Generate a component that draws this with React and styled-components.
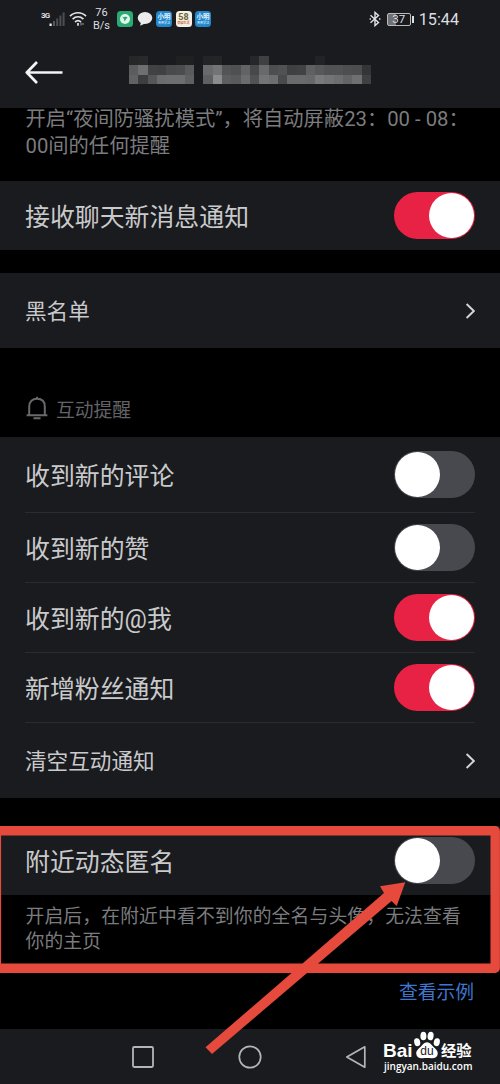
import React, { useState } from 'react'
import styled, { createGlobalStyle } from 'styled-components'

const colors = {
    page: '#000000',
    panel: '#1a1b1e',
    line: '#2b2c2f',
    text: '#c9cacc',
    muted: '#7b7c7f',
    section: '#626366',
    link: '#3f77cf',
    on: '#e72244',
    off: '#48484f',
    mark: '#e64a3c',
    white: '#ffffff',
}

const notifications = [
    { id: 'comment', name: '收到新的评论', active: false, height: 76 },
    { id: 'like', name: '收到新的赞', active: false, height: 70 },
    { id: 'mention', name: '收到新的@我', active: true, height: 70 },
    { id: 'fans', name: '新增粉丝通知', active: true, height: 70 },
]

// grey level of each title block, null leaves the bar visible
const titleBlocks = [
    [37, 39, null, null, null, 30, 30, null, 34, 35, null, null, null, 37, 62, null, null, null, null, null, 33, null, null, null, null, null],
    [90, 109, 64, 62, 72, 74, 88, null, 104, 114, 82, 78, 97, 70, 103, 76, 80, 62, 64, 94, 86, 80, 80, 76, 75, 51],
    [96, 60, 84, 106, 108, 108, 94, null, 94, 138, 92, 88, 106, 80, 114, 108, 72, 104, 104, 102, 120, 114, 108, 98, 110, 62],
]

function Switch({ active }) {
    const [checked, setChecked] = useState(active)
    return (
        <Track
            type='button'
            role='switch'
            aria-checked={checked}
            $on={checked}
            onClick={() => setChecked(!checked)}
        >
            <Thumb />
        </Track>
    )
}

function Chevron() {
    return (
        <svg width='10' height='18' viewBox='0 0 10 18' fill='none'>
            <path d='M1.6 2 8.8 9 1.6 16' stroke='#d4d5d7' strokeWidth='1.9' />
        </svg>
    )
}

function StatusBar() {
    return (
        <Status>
            <Signal>
                <Network>3G</Network>
                <svg width='17' height='15' viewBox='0 0 17 15'>
                    <rect x='0.5' y='11.5' width='2.2' height='2.5' fill='#eee' />
                    <rect x='4' y='9' width='2' height='5' fill='#55565a' />
                    <rect x='7.2' y='6.5' width='2' height='7.5' fill='#4d4e52' />
                    <rect x='10.4' y='3.5' width='2' height='10.5' fill='#4d4e52' />
                    <rect x='13.6' y='0.5' width='2' height='13.5' fill='#4d4e52' />
                </svg>
            </Signal>
            <svg width='18' height='16' viewBox='0 0 18 16' fill='none' stroke='#e2e3e5' strokeWidth='1.7'>
                <path d='M1 5.2C5.5 .6 12.5 .6 17 5.2' />
                <path d='M3.6 8.2c3.2-3 7.6-3 10.8 0' />
                <path d='M6 11c1.9-1.7 4.1-1.7 6 0' />
                <path d='M9 12v2.8' />
                <path d='M12 11.5v3m2-2.5v2' strokeWidth='1' stroke='#9a9b9e' />
            </svg>
            <Speed>
                <span>76</span>
                <span>B/s</span>
            </Speed>
            <Apps>
                <AppIcon $color='#2bab74'>
                    <svg width='12' height='12' viewBox='0 0 12 12'>
                        <circle cx='6' cy='6' r='5' fill='#e4f5ed' />
                        <path d='M3 3.4c1.6 1.4 3.2.6 3 .2l2.6.6L5.4 8.6 5 6.2Z' fill='#2bab74' />
                    </svg>
                </AppIcon>
                <svg width='16' height='16' viewBox='0 0 16 16'>
                    <ellipse cx='8' cy='7' rx='7.3' ry='6' fill='#ececec' />
                    <path d='m4 10.5-.8 4.3 5.3-2.5Z' fill='#ececec' />
                </svg>
                <AppIcon $color='#2186cb'>
                    <AppName>小明</AppName>
                    <AppNote>天天学习</AppNote>
                </AppIcon>
                <AppIcon $color='#f5efe4'>
                    <AppName $color='#6c6338' $size='9px'>58</AppName>
                    <AppNote $color='#c8623c'>同城生活</AppNote>
                </AppIcon>
                <AppIcon $color='#2186cb'>
                    <AppName>小明</AppName>
                    <AppNote>天天学习</AppNote>
                </AppIcon>
            </Apps>
            <StatusRight>
                <svg width='12' height='16' viewBox='0 0 12 16' fill='none' stroke='#e2e3e5' strokeWidth='1.4'>
                    <path d='m1.5 4.3 8 7.2L6 14.6V1.4l3.5 3.1-8 7.2' />
                    <path d='M.6 8h1.4m8 0h1.4' />
                </svg>
                <Battery>
                    <BatteryLevel>37</BatteryLevel>
                    <BatteryTip />
                </Battery>
                <Time>15:44</Time>
            </StatusRight>
        </Status>
    )
}

function TitleBar() {
    return (
        <Title>
            <svg width='38' height='24' viewBox='0 0 38 24' fill='none' stroke='#f4f4f5' strokeWidth='2.7'>
                <path d='M37.5 12.5H2M12 2 1.8 12.5 12 23' strokeLinejoin='round' />
            </svg>
            <svg width='242' height='28' viewBox='0 0 26 3' preserveAspectRatio='none' shapeRendering='crispEdges'>
                {titleBlocks.map((row, y) => row.map((level, x) => level && (
                    <rect
                        key={`${x}-${y}`}
                        x={x}
                        y={y}
                        width='1.02'
                        height='1.02'
                        fill={`rgb(${level}, ${level + 2}, ${level + 4})`}
                    />
                )))}
            </svg>
        </Title>
    )
}

function Watermark() {
    return (
        <Brand>
            <BrandRow>
                <BrandLatin>Bai</BrandLatin>
                <Paw>
                    <svg width='28' height='28' viewBox='0 0 28 28' fill='#fff'>
                        <ellipse cx='4.2' cy='11.2' rx='3' ry='4' transform='rotate(-14 4.2 11.2)' />
                        <ellipse cx='10.4' cy='5' rx='3' ry='4.3' />
                        <ellipse cx='17.6' cy='5' rx='3' ry='4.3' transform='rotate(8 17.6 5)' />
                        <ellipse cx='23.8' cy='11.2' rx='3' ry='4' transform='rotate(14 23.8 11.2)' />
                        <path d='M14 11.2c3 0 4.4 2.4 6.3 4.5 2 2.1 4.9 3.8 4.4 7.4-.5 3.4-3.4 4.6-6.2 4.2-3-.5-6-.5-9 0-2.8.4-5.7-.8-6.2-4.2-.5-3.6 2.4-5.3 4.4-7.4 1.9-2.1 3.3-4.5 6.3-4.5Z' />
                    </svg>
                    <PawText>du</PawText>
                </Paw>
                <BrandHan>经验</BrandHan>
            </BrandRow>
            <BrandSite>jingyan.baidu.com</BrandSite>
        </Brand>
    )
}

export default function App() {
    return (
        <Screen lang='zh-CN'>
            <GlobalStyle />
            <Header>
                <StatusBar />
                <TitleBar />
            </Header>
            <NightHint>
                <span>开启“夜间防骚扰模式”，将自动屏蔽23：00 - 08：</span>
                <span>00间的任何提醒</span>
            </NightHint>
            <Panel>
                <Row $height={69}>
                    <Label>接收聊天新消息通知</Label>
                    <Switch active />
                </Row>
            </Panel>
            <Gap $height={23} />
            <Panel>
                <Row $height={75}>
                    <Label $small>黑名单</Label>
                    <Chevron />
                </Row>
            </Panel>
            <SectionName>
                <svg width='24' height='26' viewBox='0 0 24 26' fill='none' stroke='#68696c' strokeWidth='2'>
                    <path d='M4.2 20.2V11.7C4.2 6.4 7.4 3.8 12 3.8s7.8 2.6 7.8 7.9v8.5M1.6 20.2h20.8' />
                    <path d='M12 1.8v2M8.5 23.2h7' />
                </svg>
                <span>互动提醒</span>
            </SectionName>
            <Panel>
                {notifications.map((item) => (
                    <Row key={item.id} $height={item.height} $line>
                        <Label>{item.name}</Label>
                        <Switch active={item.active} />
                    </Row>
                ))}
                <Row $height={75}>
                    <Label $small>清空互动通知</Label>
                    <Chevron />
                </Row>
            </Panel>
            <Gap $height={28} />
            <Panel>
                <Row $height={69}>
                    <Label>附近动态匿名</Label>
                    <Switch active={false} />
                </Row>
            </Panel>
            <NearbyHint>
                <span>开启后，在附近中看不到你的全名与头像，无法查看</span>
                <span>你的主页</span>
            </NearbyHint>
            <Example href='#'>查看示例</Example>
            <Navigation>
                <svg width='24' height='24' viewBox='0 0 24 24' fill='none' stroke='#b4b5b7' strokeWidth='1.8'>
                    <rect x='2' y='2' width='20' height='20' rx='1.2' />
                </svg>
                <svg width='24' height='24' viewBox='0 0 24 24' fill='none' stroke='#b4b5b7' strokeWidth='1.7'>
                    <circle cx='12' cy='12' r='10.7' />
                </svg>
                <svg width='24' height='24' viewBox='0 0 24 24' fill='none' stroke='#b4b5b7' strokeWidth='1.7'>
                    <path d='M1.8 12 19.8 1.8v20.4Z' strokeLinejoin='round' />
                </svg>
            </Navigation>
            <Marks viewBox='0 0 500 1084' fill='none'>
                <rect
                    x='-3.6'
                    y='830.7'
                    width='498.8'
                    height='137.5'
                    stroke={colors.mark}
                    strokeWidth='9.4'
                    strokeLinejoin='round'
                />
                <path
                    d='M205.5 1047.3 384 893 380 886.3 405.3 882.3 396.7 906 391.5 901 212 1054Z'
                    fill={colors.mark}
                />
            </Marks>
            <Watermark />
        </Screen>
    )
}

const GlobalStyle = createGlobalStyle`
    * {
        box-sizing: border-box;
    }
    body {
        margin: 0;
        background: ${colors.page};
        overflow: hidden;
    }
    svg {
        display: block;
        flex-shrink: 0;
    }
`;

const Screen = styled.div`
    position: relative;
    display: flex;
    flex-direction: column;
    width: 500px;
    height: 1084px;
    overflow: hidden;
    background: ${colors.page};
    color: ${colors.text};
    font-family: Roboto, 'Noto Sans CJK SC', sans-serif;
    white-space: nowrap;
`;

const Header = styled.header`
    height: 108px;
    flex-shrink: 0;
    background: ${colors.panel};
`;

const Status = styled.div`
    display: flex;
    align-items: center;
    height: 38px;
    padding: 0 41px;
    color: #dddee0;
`;

const Signal = styled.div`
    display: flex;
    width: 28px;
`;

const Network = styled.span`
    width: 8px;
    font-size: 8px;
    line-height: 8px;
    font-weight: 700;
    letter-spacing: -0.8px;
`;

const Speed = styled.div`
    display: flex;
    flex-direction: column;
    align-items: center;
    width: 17px;
    margin: 1px 0 0 6px;
    font-size: 11px;
    line-height: 12.5px;
`;

const Apps = styled.div`
    display: flex;
    align-items: center;
    gap: 3.5px;
    margin-left: 7px;
`;

const AppIcon = styled.div`
    display: flex;
    flex-direction: column;
    align-items: center;
    justify-content: center;
    width: 16px;
    height: 16px;
    overflow: hidden;
    border-radius: 3.5px;
    background: ${({ $color }) => $color};
`;

const AppName = styled.span`
    font-size: ${({ $size }) => $size || '6.5px'};
    line-height: 8px;
    font-weight: 700;
    color: ${({ $color }) => $color || '#e9f5ff'};
`;

const AppNote = styled.span`
    font-size: 3px;
    line-height: 4px;
    font-weight: 700;
    color: ${({ $color }) => $color || '#d3eaff'};
`;

const StatusRight = styled.div`
    display: flex;
    align-items: center;
    margin-left: auto;
`;

const Battery = styled.div`
    display: flex;
    align-items: center;
    gap: 1px;
    margin: 0 5px 0 6px;
`;

const BatteryLevel = styled.span`
    width: 24px;
    height: 13px;
    border: 1px solid #b9babc;
    border-radius: 2px;
    background: linear-gradient(to right, #707174 36%, transparent 36%);
    font-size: 11.5px;
    line-height: 11.5px;
    text-align: center;
`;

const BatteryTip = styled.span`
    width: 2px;
    height: 7px;
    background: #dddee0;
`;

const Time = styled.span`
    padding-top: 2px;
    font-size: 16.2px;
    line-height: 20px;
`;

const Title = styled.div`
    display: flex;
    gap: 66px;
    height: 70px;
    padding: 22px 0 0 25px;

    & > svg:last-child {
        margin-top: -4px;
    }
`;

const Hint = styled.p`
    display: flex;
    flex-direction: column;
    flex-shrink: 0;
    margin: 0;
    padding-left: 25.5px;
    color: ${colors.muted};
`;

const NightHint = styled(Hint)`
    height: 73px;
    font-size: 20.3px;
    line-height: 27px;

    & > span:first-child {
        margin-top: -2px;
    }
`;

const NearbyHint = styled(Hint)`
    height: 83px;
    padding-top: 10px;
    font-size: 18.8px;
    line-height: 25px;
    letter-spacing: 0.15px;
`;

const Panel = styled.section`
    flex-shrink: 0;
    padding: 0 25px;
    background: ${colors.panel};
`;

const Row = styled.div`
    display: flex;
    align-items: center;
    justify-content: space-between;
    height: ${({ $height }) => $height}px;
    border-bottom: ${({ $line }) => ($line ? `1px solid ${colors.line}` : 'none')};
`;

const Label = styled.span`
    padding-top: ${({ $small }) => ($small ? '3px' : '4px')};
    font-size: ${({ $small }) => ($small ? '21.6px' : '24.9px')};
    line-height: 36px;
`;

const Track = styled.button`
    display: flex;
    align-items: center;
    justify-content: ${({ $on }) => ($on ? 'flex-end' : 'flex-start')};
    width: 81.5px;
    height: 47.5px;
    padding: 0 1px;
    border: none;
    border-radius: 24px;
    background: ${({ $on }) => ($on ? colors.on : colors.off)};
`;

const Thumb = styled.span`
    width: 45.5px;
    height: 45.5px;
    border-radius: 50%;
    background: ${colors.white};
`;

const Gap = styled.div`
    flex-shrink: 0;
    height: ${({ $height }) => $height}px;
`;

const SectionName = styled.div`
    display: flex;
    align-items: center;
    gap: 7px;
    flex-shrink: 0;
    height: 89px;
    padding: 31px 25px 0;
    font-size: 18.8px;
    color: ${colors.section};
`;

const Example = styled.a`
    flex-shrink: 0;
    height: 51px;
    padding: 1px 26px 0 0;
    font-size: 18.8px;
    line-height: 28px;
    text-align: right;
    text-decoration: none;
    color: ${colors.link};
`;

const Navigation = styled.nav`
    display: flex;
    align-items: center;
    gap: 83px;
    height: 55px;
    padding-left: 131px;
    flex-shrink: 0;
    background: ${colors.panel};
`;

const Marks = styled.svg`
    position: absolute;
    top: 0;
    left: 0;
    width: 500px;
    height: 1084px;
    pointer-events: none;
`;

const Brand = styled.div`
    position: absolute;
    left: 383px;
    top: 1030px;
    display: flex;
    flex-direction: column;
    color: ${colors.white};
`;

const BrandRow = styled.div`
    display: flex;
    align-items: flex-end;
    height: 29px;
`;

const BrandLatin = styled.span`
    width: 30px;
    height: 16px;
    font-family: 'Liberation Sans', sans-serif;
    font-size: 19px;
    line-height: 16px;
    font-weight: 700;
`;

const Paw = styled.div`
    position: relative;
    width: 28px;
`;

const PawText = styled.span`
    position: absolute;
    left: 0;
    right: 0;
    bottom: 1px;
    font-family: 'Liberation Sans', sans-serif;
    font-size: 12px;
    line-height: 14px;
    text-align: center;
    color: ${colors.panel};
`;

const BrandHan = styled.span`
    font-size: 15.3px;
    line-height: 16px;
    font-weight: 700;
`;

const BrandSite = styled.span`
    margin: 1px 0 0 1px;
    font-family: 'Open Sans', sans-serif;
    font-size: 10px;
    line-height: 12px;
    font-weight: 600;
`;
